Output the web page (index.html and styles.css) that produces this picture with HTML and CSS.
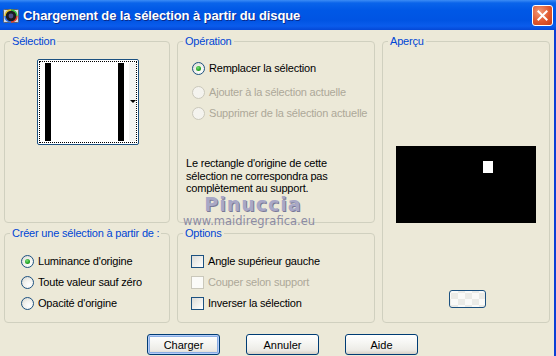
FILE: index.html
```html
<!DOCTYPE html>
<html lang="fr">

<head>
  <meta charset="UTF-8">
  <title>Chargement de la sélection à partir du disque</title>
  <link rel="stylesheet" href="styles.css">
</head>

<body>
  <div class="window">

    <!-- Title bar -->
    <div class="titlebar">
      <svg class="app-icon" viewBox="0 0 16 16" width="16" height="16" xmlns="http://www.w3.org/2000/svg">
        <rect x="0.5" y="1.5" width="15" height="13" rx="1" fill="#d8dde6" stroke="#5a6070" />
        <circle cx="8" cy="8" r="6" fill="#1a1a22" />
        <path d="M8 2 A6 6 0 0 1 14 8" stroke="#3cc040" stroke-width="1.6" fill="none" />
        <path d="M14 8 A6 6 0 0 1 8 14" stroke="#e04030" stroke-width="1.6" fill="none" />
        <path d="M8 14 A6 6 0 0 1 2 8" stroke="#3070e0" stroke-width="1.6" fill="none" />
        <path d="M2 8 A6 6 0 0 1 8 2" stroke="#e0c030" stroke-width="1.6" fill="none" />
        <circle cx="8" cy="8" r="2.4" fill="#50508a" />
      </svg>
      <span class="title">Chargement de la sélection à partir du disque</span>
      <div class="close-btn">
        <svg viewBox="0 0 21 21" width="21" height="21" xmlns="http://www.w3.org/2000/svg">
          <path d="M6 6 L15 15 M15 6 L6 15" stroke="white" stroke-width="2.2" stroke-linecap="square" />
        </svg>
      </div>
    </div>

    <div class="content">
      <div class="groups">

        <!-- Sélection -->
        <fieldset class="group group-selection">
          <legend>Sélection</legend>
          <div class="thumb">
            <div class="thumb-inner">
              <span class="bar"></span>
              <span class="thumb-white"></span>
              <span class="bar"></span>
              <span class="thumb-gap"></span>
              <span class="thumb-arrow"></span>
            </div>
          </div>
        </fieldset>

        <!-- Opération -->
        <fieldset class="group group-operation">
          <legend>Opération</legend>
          <div class="option op-first"><span class="radio checked"></span>Remplacer la sélection</div>
          <div class="option op-second disabled"><span class="radio"></span>Ajouter à la sélection actuelle</div>
          <div class="option op-third disabled"><span class="radio"></span>Supprimer de la sélection actuelle</div>
          <p class="note">Le rectangle d'origine de cette<br>sélection ne correspondra pas<br>complètement au support.</p>
        </fieldset>

        <!-- Aperçu -->
        <fieldset class="group group-preview">
          <legend>Aperçu</legend>
          <div class="preview">
            <span class="preview-dot"></span>
          </div>
          <div class="bg-btn"></div>
        </fieldset>

        <!-- Créer une sélection -->
        <fieldset class="group group-create">
          <legend>Créer une sélection à partir de :</legend>
          <div class="option-list">
            <div class="option"><span class="radio checked"></span>Luminance d'origine</div>
            <div class="option"><span class="radio"></span>Toute valeur sauf zéro</div>
            <div class="option"><span class="radio"></span>Opacité d'origine</div>
          </div>
        </fieldset>

        <!-- Options -->
        <fieldset class="group group-options">
          <legend>Options</legend>
          <div class="option-list">
            <div class="option"><span class="check"></span>Angle supérieur gauche</div>
            <div class="option disabled"><span class="check"></span>Couper selon support</div>
            <div class="option"><span class="check"></span>Inverser la sélection</div>
          </div>
        </fieldset>

      </div>

      <div class="buttons">
        <button class="btn default">Charger</button>
        <button class="btn">Annuler</button>
        <button class="btn">Aide</button>
      </div>
    </div>

    <!-- watermark over the dialog -->
    <div class="watermark">
      <span class="wm-name">Pinuccia</span>
      <span class="wm-url">www.maidiregrafica.eu</span>
    </div>

  </div>
</body>

</html>
```

FILE: styles.css
```css
body {
  margin: 0;
  width: 556px;
  height: 356px;
  overflow: hidden;
  background-color: #ece9d8;
  font-family: "Liberation Sans", Arial, sans-serif;
  font-size: 11px;
  letter-spacing: -0.2px;
  color: #000;
}

.window {
  position: relative;
  height: 356px;
  border-right: 2px solid #0b3fd6;
  box-sizing: border-box;
}

/* Title bar */
.titlebar {
  height: 30px;
  display: flex;
  align-items: center;
  background: linear-gradient(#3c8cf5 0, #0a64ea 3px, #0058e6 10px, #0054e3 20px, #0a5cec 26px, #0448d6 30px);
  margin-right: -2px;
  padding-left: 3px;
}

.app-icon {
  flex: none;
  margin-top: 1px;
}

.title {
  margin-left: 4px;
  color: white;
  font-weight: bold;
  font-size: 13px;
  letter-spacing: -0.1px;
  text-shadow: 1px 1px 0 #0a2a8a;
}

.close-btn {
  margin-left: auto;
  margin-right: 3px;
  width: 21px;
  height: 21px;
  border: 1px solid white;
  border-radius: 3px;
  box-sizing: border-box;
  background: radial-gradient(circle at 35% 30%, #f29a78 0, #e0582e 55%, #c43c18 100%);
  display: flex;
  align-items: center;
  justify-content: center;
}

.close-btn svg {
  width: 19px;
  height: 19px;
}

/* Groups */
.content {
  padding: 5px 0 0 4px;
}

.groups {
  display: grid;
  grid-template-columns: 166px 198px 168px;
  grid-template-rows: 188px 96px;
  column-gap: 7px;
  row-gap: 4px;
}

.group {
  margin: 0;
  padding: 0;
  min-width: 0;
  border: 1px solid #d0d0bf;
  border-radius: 4px;
  display: flex;
  flex-direction: column;
}

.group legend {
  margin-left: 5px;
  padding: 0 2px;
  line-height: 13px;
  color: #0046d5;
}

.group-preview {
  grid-column: 3;
  grid-row: 1 / 3;
  align-items: center;
}

.group-create {
  grid-column: 1;
  grid-row: 2;
}

.group-options {
  grid-column: 2;
  grid-row: 2;
}

/* Selection thumbnail */
.thumb {
  align-self: center;
  margin-top: 11px;
  margin-left: 1px;
  width: 102px;
  height: 86px;
  border: 1px solid #1c5180;
  border-radius: 2px;
  box-sizing: border-box;
  background: white;
  padding: 1px;
}

.thumb-inner {
  height: 100%;
  border: 1px dotted #000;
  box-sizing: border-box;
  display: flex;
  padding: 1px 0 1px 5px;
}

.bar {
  width: 6px;
  background: black;
}

.thumb-white {
  flex: 1;
}

.thumb-gap {
  width: 5px;
}

.thumb-arrow {
  width: 7px;
  background: #f4f4f2;
  position: relative;
}

.thumb-arrow::after {
  content: "";
  position: absolute;
  left: 1px;
  top: 37px;
  border-left: 3px solid transparent;
  border-right: 3px solid transparent;
  border-top: 3px solid black;
}

/* Radios and checkboxes */
.option {
  display: flex;
  align-items: center;
  height: 14px;
  white-space: nowrap;
}

.option.disabled {
  color: #aca899;
}

.radio {
  flex: none;
  width: 13px;
  height: 13px;
  margin-right: 4px;
  border: 1px solid #1c5180;
  border-radius: 50%;
  box-sizing: border-box;
  background: radial-gradient(circle at 65% 70%, #ffffff 0, #f2f2ee 45%, #d4d4cc 100%);
  position: relative;
}

.radio.checked::after {
  content: "";
  position: absolute;
  left: 3px;
  top: 3px;
  width: 5px;
  height: 5px;
  border-radius: 50%;
  background: radial-gradient(circle at 40% 35%, #7ae07a 0, #21a121 60%, #1a7a1a 100%);
}

.disabled .radio {
  border-color: #cac8bb;
  background: #f4f3ee;
}

.check {
  flex: none;
  width: 13px;
  height: 13px;
  margin-right: 4px;
  border: 1px solid #1c5180;
  box-sizing: border-box;
  background: linear-gradient(135deg, #dcdcd7 0, #f2f2ef 60%, #ffffff 100%);
}

.disabled .check {
  border-color: #cac8bb;
  background: #fbfbf8;
}

/* Opération */
.group-operation .option {
  margin-left: 14px;
}

.op-first {
  margin-top: 13px;
}

.op-second {
  margin-top: 10px;
}

.op-third {
  margin-top: 7px;
}

.note {
  margin: 37px 0 0 8px;
  line-height: 12.5px;
}

/* Créer / Options lists */
.option-list {
  display: flex;
  flex-direction: column;
  gap: 7px;
  margin-top: 14px;
}

.group-create .option-list {
  margin-left: 16px;
}

.group-options .option-list {
  margin-left: 13px;
}

/* Aperçu */
.preview {
  margin-top: 98px;
  width: 140px;
  height: 77px;
  background: black;
  position: relative;
}

.preview-dot {
  position: absolute;
  left: 87px;
  top: 15px;
  width: 10px;
  height: 12px;
  background: white;
}

.bg-btn {
  margin-top: 67px;
  margin-left: 3px;
  width: 37px;
  height: 18px;
  border: 1px solid #1c5180;
  border-radius: 3px;
  box-sizing: border-box;
  background:
    repeating-conic-gradient(#ebebe7 0 25%, #fafaf8 0 50%) 8px 2px / 14px 12px,
    #f4f4f0;
}

/* Buttons */
.buttons {
  display: flex;
  gap: 26px;
  margin-top: 11px;
  padding-left: 143px;
}

.btn {
  width: 73px;
  height: 21px;
  padding: 0;
  border: 1px solid #003c74;
  border-radius: 3px;
  background: linear-gradient(#ffffff 0, #f6f6f3 40%, #ecebe6 80%, #d6d0c5 100%);
  font-family: "Liberation Sans", Arial, sans-serif;
  font-size: 11px;
  color: #000;
}

.btn.default {
  box-shadow: inset 0 0 0 1px #b6cdf8, inset 0 0 0 2px #89ade4;
}

/* Watermark */
.watermark {
  position: absolute;
  left: 186px;
  top: 193px;
  width: 126px;
  display: flex;
  flex-direction: column;
  align-items: center;
  pointer-events: none;
}

.wm-name {
  margin-left: 8px;
  font-family: "DejaVu Sans", sans-serif;
  font-weight: bold;
  font-size: 19px;
  line-height: 22px;
  letter-spacing: 1px;
  color: #a8a8c6;
  text-shadow: 1px 1px 0 #7a7a98;
}

.wm-url {
  font-family: "DejaVu Sans", sans-serif;
  font-size: 11.5px;
  line-height: 12px;
  letter-spacing: 0;
  color: #8c8ca4;
}
```
